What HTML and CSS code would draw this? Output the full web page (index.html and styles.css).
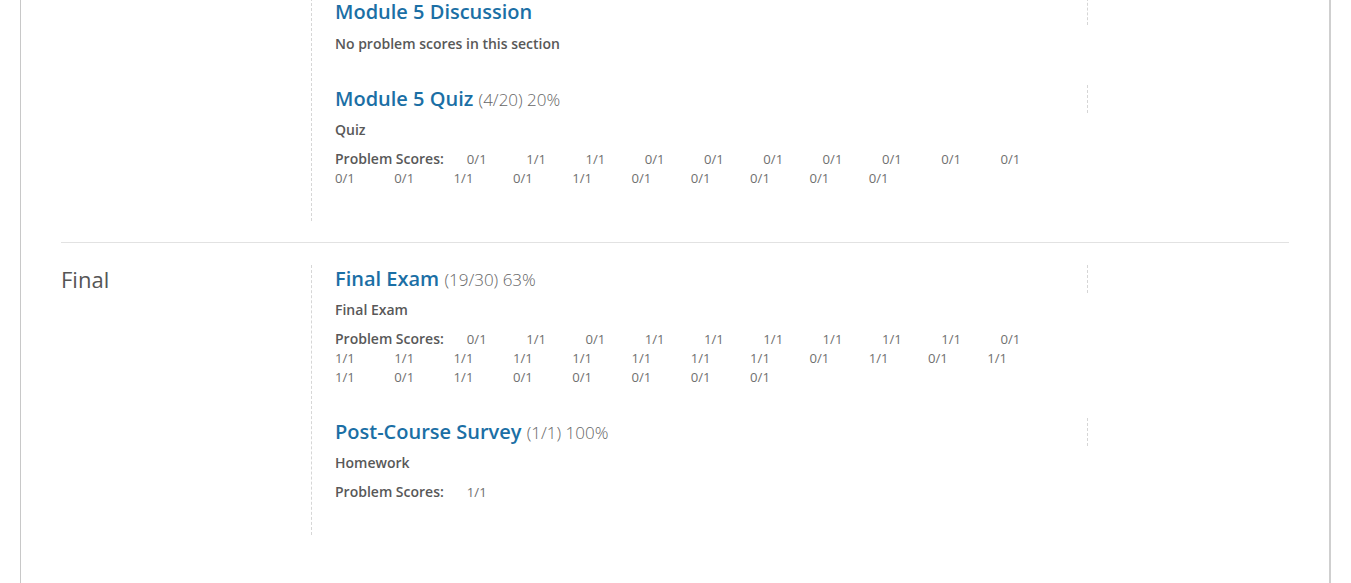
FILE: index.html
```html
<!DOCTYPE html>
<html lang="en">
<head>
<meta charset="utf-8">
<title>Course Progress</title>
<link rel="stylesheet" href="styles.css">
</head>
<body>
<div class="wrapper">
  <div class="chapters">
    <section class="chapter">
      <h2 class="chapter-name"></h2>
      <ol class="sections">
        <li class="section">
          <h3 class="section-title"><a href="#">Module 5 Discussion</a></h3>
          <p class="no-scores">No problem scores in this section</p>
        </li>
        <li class="section">
          <h3 class="section-title"><a href="#">Module 5 Quiz</a> <span class="score">(4/20) 20%</span></h3>
          <p class="format">Quiz</p>
          <div class="scores"><span class="scores-label">Problem Scores:</span><ol class="score-list"><li>0/1</li><li>1/1</li><li>1/1</li><li>0/1</li><li>0/1</li><li>0/1</li><li>0/1</li><li>0/1</li><li>0/1</li><li>0/1</li><li>0/1</li><li>0/1</li><li>1/1</li><li>0/1</li><li>1/1</li><li>0/1</li><li>0/1</li><li>0/1</li><li>0/1</li><li>0/1</li></ol></div>
        </li>
      </ol>
    </section>
    <section class="chapter">
      <h2 class="chapter-name">Final</h2>
      <ol class="sections">
        <li class="section">
          <h3 class="section-title"><a href="#">Final Exam</a> <span class="score">(19/30) 63%</span></h3>
          <p class="format">Final Exam</p>
          <div class="scores"><span class="scores-label">Problem Scores:</span><ol class="score-list"><li>0/1</li><li>1/1</li><li>0/1</li><li>1/1</li><li>1/1</li><li>1/1</li><li>1/1</li><li>1/1</li><li>1/1</li><li>0/1</li><li>1/1</li><li>1/1</li><li>1/1</li><li>1/1</li><li>1/1</li><li>1/1</li><li>1/1</li><li>1/1</li><li>0/1</li><li>1/1</li><li>0/1</li><li>1/1</li><li>1/1</li><li>0/1</li><li>1/1</li><li>0/1</li><li>0/1</li><li>0/1</li><li>0/1</li><li>0/1</li></ol></div>
        </li>
        <li class="section">
          <h3 class="section-title"><a href="#">Post-Course Survey</a> <span class="score">(1/1) 100%</span></h3>
          <p class="format">Homework</p>
          <div class="scores"><span class="scores-label">Problem Scores:</span><ol class="score-list"><li>1/1</li></ol></div>
        </li>
      </ol>
    </section>
  </div>
</div>
</body>
</html>
```

FILE: styles.css
```css
html, body {
  margin: 0;
  padding: 0;
  background: #ffffff;
}

body {
  font-family: "Open Sans", "Liberation Sans", sans-serif;
  color: #4a4a4a;
  padding: 0 20px;
}

.wrapper {
  margin-top: -2px;
  border-left: 1px solid #c8c8c8;
  border-right: 2px solid #cfcfcf;
  padding: 0 40px 60px 40px;
  min-height: 600px;
}

.chapter {
  display: grid;
  grid-template-columns: 250px 1fr;
  padding-bottom: 21px;
  border-bottom: 1px solid #e2e2e2;
}

.chapter + .chapter {
  padding-top: 22px;
  border-bottom: none;
}

.chapter-name {
  margin: 0;
  font-size: 22px;
  font-weight: 400;
  line-height: 28px;
  color: #555555;
}

.sections {
  list-style: none;
  margin: 0;
  padding: 0 0 0 23px;
  border-left: 1px dashed #d6d6d6;
}

.section {
  width: 753px;
  padding-bottom: 32px;
}

.section:last-child {
  padding-bottom: 34px;
}

.section-title {
  margin: 0;
  font-size: 20px;
  line-height: 27px;
  font-weight: 600;
  border-right: 1px dashed #d6d6d6;
}

.section-title a {
  color: #1b6fa5;
  text-decoration: none;
}

.section-title .score {
  font-size: 17px;
  font-weight: 300;
  color: #666666;
}

.no-scores,
.format {
  margin: 7px 0 0 0;
  font-size: 14px;
  line-height: 20px;
  font-weight: 600;
  color: #585858;
}

.no-scores {
  margin-top: 11px;
  line-height: 16px;
  padding-bottom: 1px;
}

.scores {
  margin-top: 9px;
  line-height: 18px;
}

.scores-label {
  font-size: 14px;
  font-weight: 600;
  color: #585858;
  margin-right: 23px;
}

.score-list {
  display: inline;
  list-style: none;
  margin: 0;
  padding: 0;
}

.score-list li {
  display: inline-block;
  font-size: 13.15px;
  color: #707070;
  padding-right: 3em;
}
```
